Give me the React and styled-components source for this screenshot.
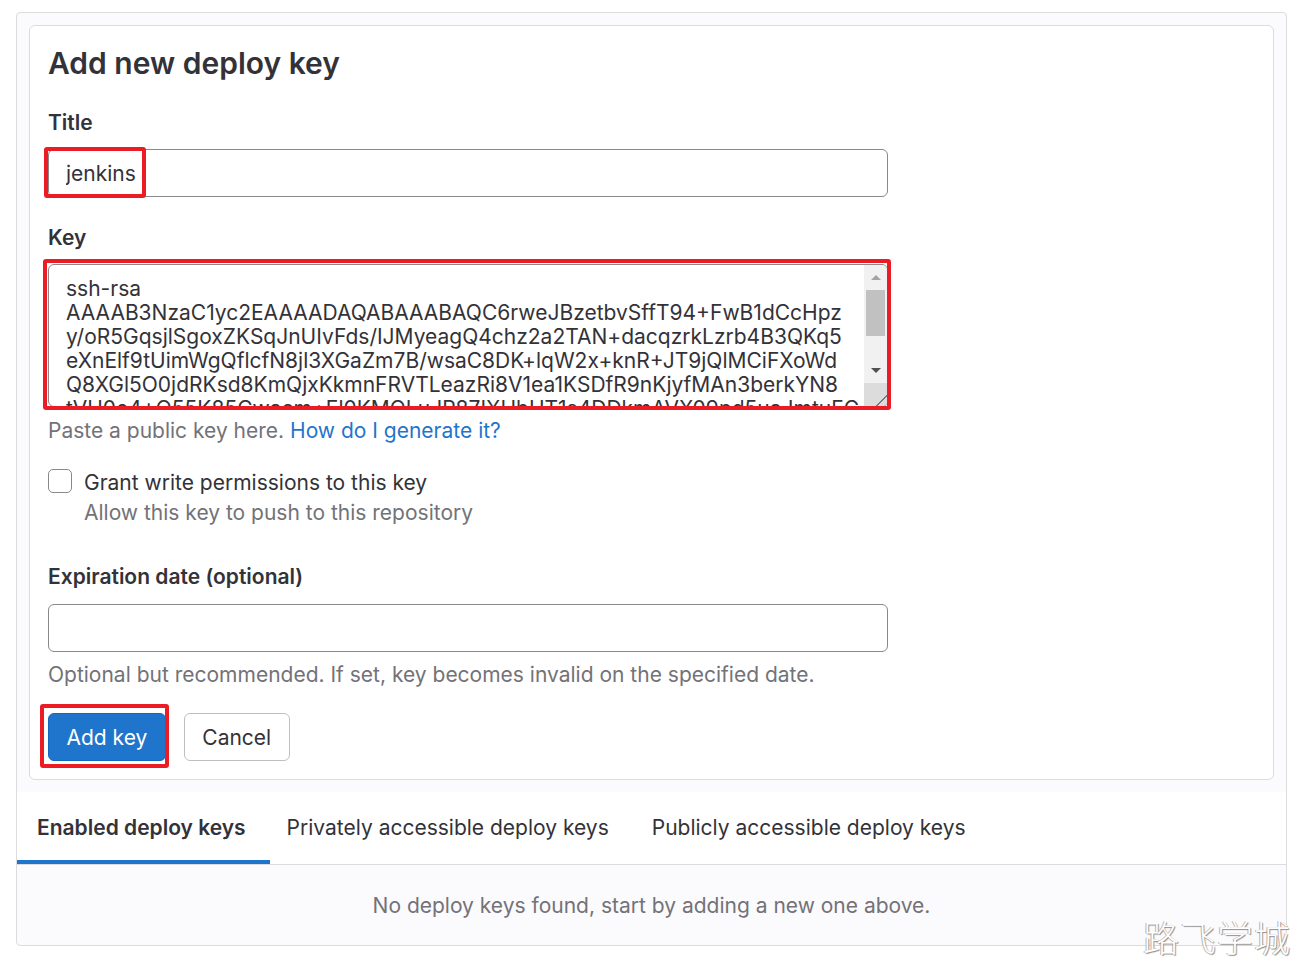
import React from 'react';
import styled, { createGlobalStyle } from 'styled-components';

const GlobalStyle = createGlobalStyle`
    body {
        margin: 0;
        background: #fff;
        font-family: Inter, "Noto Sans", sans-serif;
        color: #333238;
    }
`;

const Page = styled.div`
    position: relative;
    padding: 12px 12px 16px 16px;
`;

const Outer = styled.div`
    border: 1px solid #dcdcde;
    border-radius: 4px;
    background: #fbfafd;
`;

const CardWrap = styled.div`
    padding: 12px;
`;

const Card = styled.form`
    background: #fff;
    border: 1px solid #dcdcde;
    border-radius: 6px;
    padding: 19px 18px 18px 18px;
`;

const Heading = styled.h2`
    margin: 0;
    font-size: 30px;
    line-height: 36px;
    font-weight: 600;
`;

const Label = styled.label`
    display: block;
    margin-top: ${(p) => p.$top}px;
    padding-top: 2px;
    font-size: 21px;
    line-height: 26px;
    font-weight: 600;
`;

const Field = styled.div`
    position: relative;
    width: 840px;
    margin-top: ${(p) => p.$top}px;
`;

const Input = styled.input`
    display: block;
    box-sizing: border-box;
    width: 100%;
    height: 48px;
    padding: 0 17px;
    border: 1px solid #89888d;
    border-radius: 6px;
    font-family: inherit;
    font-size: 21px;
    color: #333238;
    background: #fff;
    outline: none;
`;

const TextArea = styled.textarea`
    display: block;
    box-sizing: border-box;
    width: 100%;
    height: 143px;
    padding: 12px 24px 0 17px;
    border: 1px solid #89888d;
    border-radius: 6px;
    font-family: inherit;
    font-size: 21px;
    line-height: 24px;
    color: #333238;
    background: #fff;
    outline: none;
    resize: none;
    overflow: hidden;
`;

// the textarea's scrollbar, drawn over its right edge
const ScrollBar = styled.div`
    position: absolute;
    top: 1px;
    right: 1px;
    bottom: 1px;
    width: 23px;
    display: flex;
    flex-direction: column;
    background: #f1f1f1;
    border-radius: 0 5px 5px 0;
    overflow: hidden;
`;

const ScrollButton = styled.div`
    flex: none;
    height: 25px;
    display: flex;
    align-items: center;
    justify-content: center;

    &::before {
        content: '';
        width: 0;
        height: 0;
        border-left: 5px solid transparent;
        border-right: 5px solid transparent;
        ${(p) => (p.$down
            ? 'border-top: 5px solid #505050;'
            : 'border-bottom: 5px solid #a3a3a3;')}
    }
`;

const Thumb = styled.div`
    flex: none;
    height: 46px;
    margin: 0 2px;
    background: #c1c1c1;
`;

const Track = styled.div`
    flex: 1;
`;

const Resizer = styled.div`
    flex: none;
    height: 23px;
    background:
        linear-gradient(135deg, transparent 74%, #7a7a7a 74%, #7a7a7a 79%, transparent 79%),
        #dcdcdc;
`;

// red annotation frame drawn over the screenshot
const Mark = styled.span`
    position: absolute;
    top: ${(p) => p.$t}px;
    left: ${(p) => p.$l}px;
    width: ${(p) => p.$w}px;
    height: ${(p) => p.$h}px;
    border: 4px solid #ec1c24;
    border-radius: 3px;
    box-sizing: border-box;
    pointer-events: none;
`;

const Help = styled.p`
    margin: ${(p) => p.$top}px 0 0;
    padding-top: 2px;
    font-size: 21px;
    line-height: 26px;
    color: #737278;
`;

const Link = styled.a`
    color: #1f75cb;
    text-decoration: none;
`;

const CheckRow = styled.div`
    display: flex;
    gap: 12px;
    margin-top: 23px;
`;

const Box = styled.span`
    flex: none;
    width: 24px;
    height: 24px;
    margin-top: 2px;
    box-sizing: border-box;
    border: 1px solid #89888d;
    border-radius: 5px;
    background: #fff;
`;

const CheckText = styled.div`
    padding-top: 1px;
    font-size: 21px;
    line-height: 30px;
`;

const SubText = styled.div`
    color: #737278;
`;

const Actions = styled.div`
    display: flex;
    gap: 18px;
    margin-top: 25px;
`;

const ButtonWrap = styled.div`
    position: relative;
`;

const Button = styled.button`
    height: 48px;
    padding: 0 17.5px;
    border-radius: 6px;
    font-family: inherit;
    font-size: 21px;
    cursor: pointer;
    color: ${(p) => (p.$primary ? '#fff' : '#333238')};
    background: ${(p) => (p.$primary ? '#1f75cb' : '#fff')};
    border: 1px solid ${(p) => (p.$primary ? '#1068bf' : '#bfbfc3')};
`;

const Tabs = styled.div`
    display: flex;
    background: #fff;
    border-bottom: 1px solid #dcdcde;
    height: 72px;
`;

const Tab = styled.div`
    display: flex;
    align-items: center;
    padding: ${(p) => (p.$active ? '0 24px 2px 20px' : '0 26px 2px 17px')};
    font-size: 21px;
    font-weight: ${(p) => (p.$active ? 600 : 400)};
    box-shadow: ${(p) => (p.$active ? 'inset 0 -4px 0 #1f75cb' : 'none')};
`;

const Empty = styled.div`
    height: 80px;
    display: flex;
    align-items: center;
    justify-content: center;
    font-size: 21px;
    color: #737278;
`;

const Watermark = styled.div`
    position: absolute;
    right: 8px;
    top: 910px;
    font-family: "Noto Sans CJK SC", sans-serif;
    font-size: 36px;
    font-weight: 300;
    letter-spacing: 1px;
    color: #fff;
    text-shadow: 1px 1px 1px #8d8d8d, -1px 0 0 #b5b5b5;
`;

const keyValue = [
    'ssh-rsa',
    'AAAAB3NzaC1yc2EAAAADAQABAAABAQC6rweJBzetbvSffT94+FwB1dCcHpz',
    'y/oR5GqsjlSgoxZKSqJnUIvFds/IJMyeagQ4chz2a2TAN+dacqzrkLzrb4B3QKq5',
    'eXnElf9tUimWgQflcfN8jl3XGaZm7B/wsaC8DK+lqW2x+knR+JT9jQlMCiFXoWd',
    'Q8XGl5O0jdRKsd8KmQjxKkmnFRVTLeazRi8V1ea1KSDfR9nKjyfMAn3berkYN8',
    'tVH0e4+Q55K85Cwacm+El0KMQLuJP87IXUbHT1s4DDkmAVX09pd5uaJmtuFGi',
    'Rw3zK9vTqLm2Pa8N1jH5cXo7BfGe4sD6WnYkUr0Qi+ZpLt3Vh',
    'jenkins@server',
].join('\n');

const App = () => {
    return (
        <Page>
            <GlobalStyle />
            <Outer>
                <CardWrap>
                    <Card onSubmit={(e) => e.preventDefault()}>
                        <Heading>Add new deploy key</Heading>

                        <Label $top={27}>Title</Label>
                        <Field $top={13}>
                            <Input defaultValue="jenkins" />
                            <Mark $t={-2} $l={-4} $w={102} $h={51} />
                        </Field>

                        <Label $top={26}>Key</Label>
                        <Field $top={13}>
                            <TextArea defaultValue={keyValue} />
                            <ScrollBar>
                                <ScrollButton />
                                <Thumb />
                                <Track />
                                <ScrollButton $down />
                                <Resizer />
                            </ScrollBar>
                            <Mark $t={-5} $l={-5} $w={848} $h={151} />
                        </Field>
                        <Help $top={9}>
                            Paste a public key here. <Link href="#">How do I generate it?</Link>
                        </Help>

                        <CheckRow>
                            <Box />
                            <CheckText>
                                Grant write permissions to this key
                                <SubText>Allow this key to push to this repository</SubText>
                            </CheckText>
                        </CheckRow>

                        <Label $top={34}>Expiration date (optional)</Label>
                        <Field $top={14}>
                            <Input />
                        </Field>
                        <Help $top={8}>
                            Optional but recommended. If set, key becomes invalid on the specified date.
                        </Help>

                        <Actions>
                            <ButtonWrap>
                                <Button $primary type="submit">Add key</Button>
                                <Mark $t={-9} $l={-8} $w={129} $h={64} />
                            </ButtonWrap>
                            <Button type="button">Cancel</Button>
                        </Actions>
                    </Card>
                </CardWrap>

                <Tabs>
                    <Tab $active>Enabled deploy keys</Tab>
                    <Tab>Privately accessible deploy keys</Tab>
                    <Tab>Publicly accessible deploy keys</Tab>
                </Tabs>
                <Empty>No deploy keys found, start by adding a new one above.</Empty>
            </Outer>
            <Watermark>路飞学城</Watermark>
        </Page>
    );
};

export default App;
